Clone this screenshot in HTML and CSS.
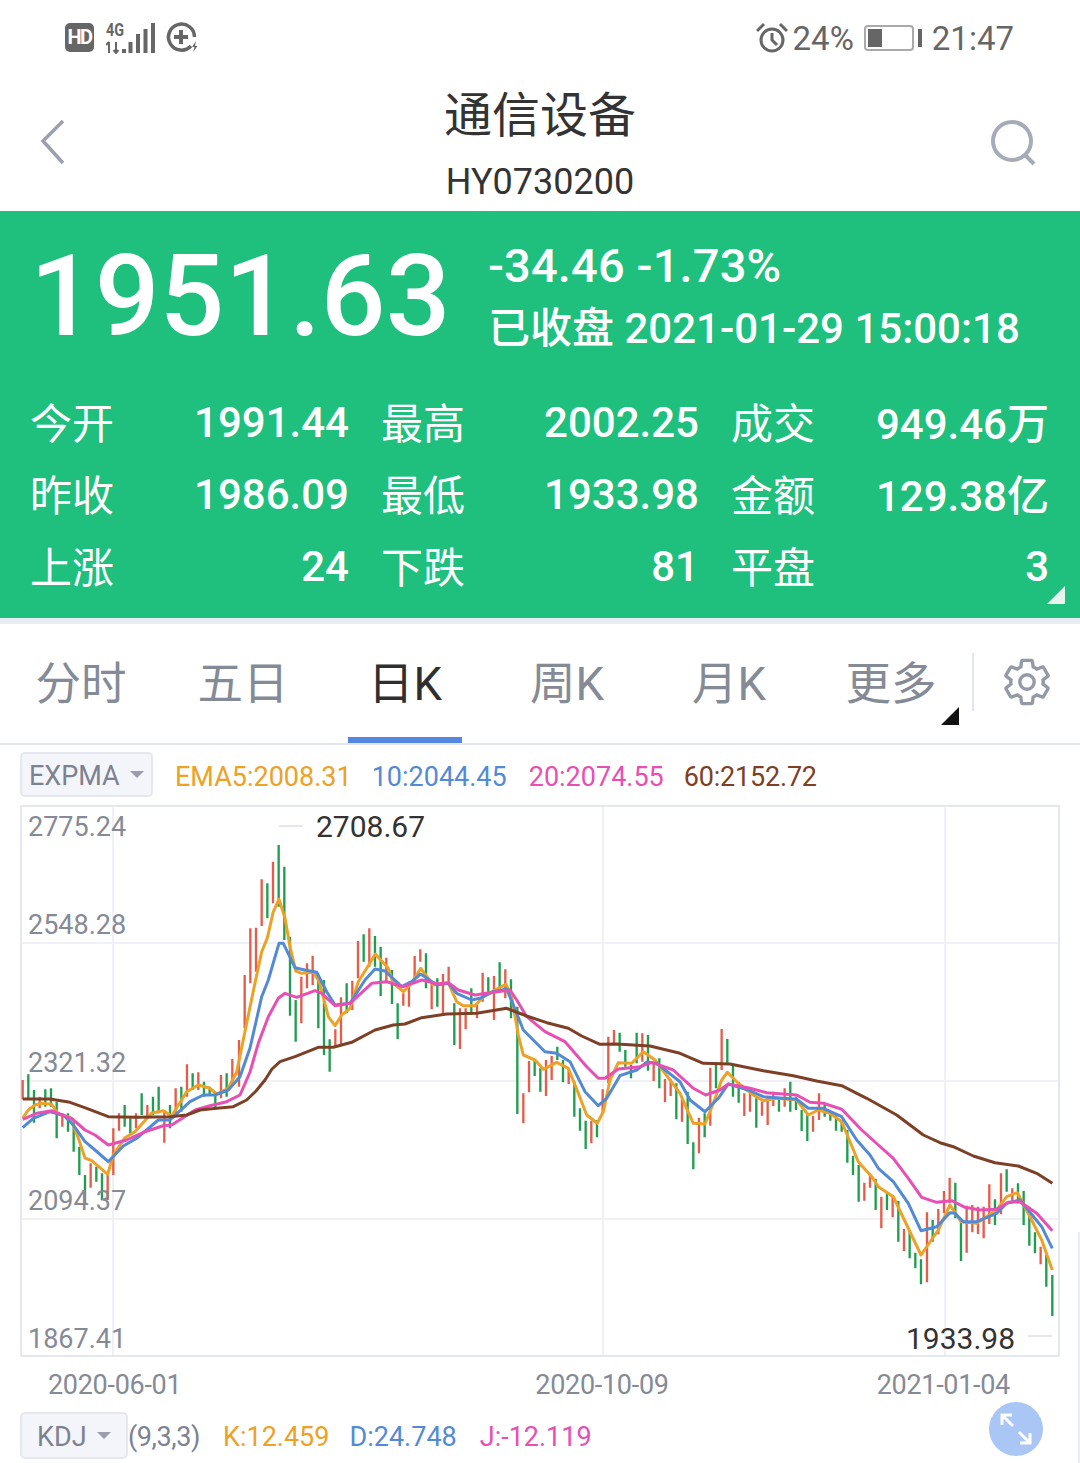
FILE: index.html
```html
<!DOCTYPE html>
<html lang="zh-CN">
<head>
    <meta charset="UTF-8">
    <meta name="viewport" content="width=device-width, initial-scale=1.0">
    <title>通信设备</title>
    <link rel="stylesheet" href="styles.css">
</head>
<body>
    <div class="status-bar">
        <div class="status-left">
            <span class="hd-badge">HD</span>
            <div class="signal">
                <span class="signal-type">4G</span>
                <svg class="signal-icon" width="50" height="32" viewBox="0 0 50 32">
                    <path class="signal-arrows" d="M3 20V31M0 23L3 20M10 20V31M7.5 28L10 31L12.5 28"/>
                    <path class="signal-bars" d="M18 27V31M24.5 20V31M32 12V31M39.5 7V31M47 1V31"/>
                </svg>
            </div>
            <svg class="data-icon" width="32" height="32" viewBox="0 0 32 32">
                <path class="status-ring" d="M25 24A13 13 0 1 1 28.5 15"/>
                <path class="status-plus" d="M15 8V22M8 15H22"/>
                <path class="status-fill" d="M30 19L26 25H28.5L27 30L31.5 24H29Z"/>
            </svg>
        </div>
        <div class="status-right">
            <svg class="alarm-icon" width="32" height="32" viewBox="0 0 32 32">
                <circle class="status-line" cx="16" cy="18" r="11"/>
                <path class="status-line" d="M16 11V18L21 23M1 9L8 2M31 9L24 2"/>
            </svg>
            <span class="status-text">24%</span>
            <div class="battery">
                <div class="battery-body"><div class="battery-level"></div></div>
                <div class="battery-cap"></div>
            </div>
            <span class="status-text">21:47</span>
        </div>
    </div>

    <div class="top-bar">
        <svg class="back-icon" width="28" height="46" viewBox="0 0 28 46">
            <path d="M24 2L4 22L24 44"/>
        </svg>
        <div class="top-title">
            <div class="title-name">通信设备</div>
            <div class="title-code">HY0730200</div>
        </div>
        <svg class="search-icon" width="48" height="48" viewBox="0 0 48 48">
            <circle cx="22" cy="21" r="19"/>
            <path d="M35 35L44 44"/>
        </svg>
    </div>

    <div class="quote">
        <div class="quote-top">
            <div class="quote-price">1951.63</div>
            <div class="quote-side">
                <div class="quote-change">-34.46 -1.73%</div>
                <div class="quote-time">已收盘 2021-01-29 15:00:18</div>
            </div>
        </div>
        <div class="quote-grid">
            <div class="cell"><span class="cell-name">今开</span><span class="cell-val">1991.44</span></div>
            <div class="cell"><span class="cell-name">最高</span><span class="cell-val">2002.25</span></div>
            <div class="cell"><span class="cell-name">成交</span><span class="cell-val cell-val-unit">949.46万</span></div>
            <div class="cell"><span class="cell-name">昨收</span><span class="cell-val">1986.09</span></div>
            <div class="cell"><span class="cell-name">最低</span><span class="cell-val">1933.98</span></div>
            <div class="cell"><span class="cell-name">金额</span><span class="cell-val cell-val-unit">129.38亿</span></div>
            <div class="cell"><span class="cell-name">上涨</span><span class="cell-val">24</span></div>
            <div class="cell"><span class="cell-name">下跌</span><span class="cell-val">81</span></div>
            <div class="cell"><span class="cell-name">平盘</span><span class="cell-val">3</span></div>
        </div>
        <div class="quote-corner"></div>
    </div>

    <div class="tabs">
        <div class="tab">分时</div>
        <div class="tab">五日</div>
        <div class="tab tab-active">日K</div>
        <div class="tab">周K</div>
        <div class="tab">月K</div>
        <div class="tab tab-more">更多</div>
        <div class="tabs-divider"></div>
        <svg class="gear-icon" width="54" height="54" viewBox="0 0 24 24">
            <path d="M19.14 12.94c.04-.3.06-.61.06-.94 0-.32-.02-.64-.07-.94l2.03-1.58c.18-.14.23-.41.12-.61l-1.92-3.32c-.12-.22-.37-.29-.59-.22l-2.39.96c-.5-.38-1.03-.7-1.62-.94l-.36-2.54c-.04-.24-.24-.41-.48-.41h-3.84c-.24 0-.43.17-.47.41l-.36 2.54c-.59.24-1.13.57-1.62.94l-2.39-.96c-.22-.08-.47 0-.59.22L2.74 8.87c-.12.21-.08.47.12.61l2.03 1.58c-.05.3-.09.63-.09.94s.02.64.07.94l-2.03 1.58c-.18.14-.23.41-.12.61l1.92 3.32c.12.22.37.29.59.22l2.39-.96c.5.38 1.03.7 1.62.94l.36 2.54c.05.24.24.41.48.41h3.84c.24 0 .44-.17.47-.41l.36-2.54c.59-.24 1.13-.56 1.62-.94l2.39.96c.22.08.47 0 .59-.22l1.92-3.32c.12-.22.07-.47-.12-.61l-2.01-1.58z"/>
            <circle cx="12" cy="12" r="3.2"/>
        </svg>
    </div>

    <div class="legend">
        <div class="picker picker-expma">EXPMA<span class="picker-caret"></span></div>
        <span class="c-orange">EMA5:2008.31</span>
        <span class="c-blue">10:2044.45</span>
        <span class="c-pink">20:2074.55</span>
        <span class="c-brown">60:2152.72</span>
    </div>

    <div class="chart">
        <svg class="chart-svg" width="1040" height="552" viewBox="20 805 1040 552">
            <path class="grid" d="M20 943H1060M20 1081H1060M20 1219H1060M113 805V1357M603 805V1357M945 805V1357"/>
            <rect class="frame" x="21" y="806" width="1038" height="550"/>
            <path class="tick" d="M279 826H303M1028 1336H1052"/>

            <!-- candles, first part -->
            <g transform="translate(20 1040) scale(.3333)">
                <path class="up" d="M8 120V178M59 170V205M127 225V260M212 370V443M263 400V480M280 265V405M297 220V272M348 220V265M382 195V230M433 210V308M467 145V230M501 73V170M535 97V150M603 105V175M637 57V125"/>
                <path class="down" d="M25 103V178M42 150V248M76 148V200M93 145V200M110 185V295M144 220V275M161 245V335M178 320V405M195 405V490M229 380V425M246 400V480M314 195V260M331 235V280M365 160V225M399 170V225M416 140V220M450 195V265M484 140V215M518 100V150M552 125V170M569 140V165M586 160V205M620 100V170"/>
            </g>
            <g transform="translate(230 840) scale(.3333)">
                <path class="up" d="M27 600V740M44 405V565M61 265V430M78 263V395M95 118V258M129 65V190M214 410V550M231 370V445M248 347V435M316 568V620M333 472V612M367 422V510M384 303V415M418 265V380M469 353V425M520 460V497M537 425V500M554 348V430M571 328V365M605 430V508M639 402V520M656 380V430M690 505V627M707 505V568M741 490V535M758 398V485M792 408V540M826 388V475"/>
                <path class="down" d="M112 130V235M146 15V200M163 80V300M180 290V527M197 480V605M265 420V565M282 420V645M299 598V695M350 430V520M401 283V365M435 288V380M452 320V468M486 390V492M503 490V597M588 340V445M622 415V500M673 490V615M724 445V525M775 412V460M809 367V448M843 418V535"/>
            </g>
            <g transform="translate(510 1000) scale(.3333)">
                <path class="up" d="M40 280V370M57 183V277M108 180V288M125 168V240M176 205V252M244 362V430M278 268V340M295 110V250M312 90V135M397 100V185M431 190V243M465 237V307M482 237V288M516 297V365M567 353V460M601 203V377M635 87V210M703 280V348M720 280V335M756 305V347M773 290V375M790 275V318M824 265V320"/>
                <path class="down" d="M22 20V342M74 180V228M91 205V275M142 140V180M159 180V247M193 245V350M210 325V392M227 362V447M261 360V412M329 98V155M346 150V200M363 195V235M380 98V190M414 105V212M448 175V265M499 250V358M533 275V432M550 427V508M584 340V412M618 187V265M652 117V195M669 195V290M686 245V308M739 295V383M807 295V335M841 245V335M858 290V330M875 330V393M892 340V423"/>
            </g>
            <g transform="translate(800 1070) scale(.3333)">
                <path class="up" d="M39 138V185M57 70V150M193 338V392M210 310V353M244 380V475M278 375V442M312 477V543M381 427V637M415 417V493M432 363V430M449 323V400M500 407V548M517 405V487M534 410V492M551 410V505M568 343V462M603 310V433M637 355V395M722 530V583"/>
                <path class="down" d="M74 105V140M91 125V152M108 130V182M125 150V185M142 180V278M159 257V315M176 285V395M227 327V420M261 370V420M295 393V515M329 487V565M346 548V595M363 568V643M398 450V515M466 338V445M483 455V573M585 388V465M620 298V365M654 340V400M671 363V465M688 410V527M705 487V550M739 555V650M757 615V738"/>
            </g>

            <polyline class="line line-orange" points="22.7,1118 28.3,1110 35,1105 41.7,1103.3 51.7,1104.3 58.3,1114 70,1117.3 78.3,1138 85,1158 91.7,1160.7 107.7,1174.3 113.3,1155 125,1137.7 135,1131.7 151.7,1113 163.3,1110.7 171.7,1116 186.7,1091.7 198.3,1085 210,1088.3 216.7,1094 228.3,1088.3 236.7,1072 246.7,1023 255,983 261.7,951.7 267.3,938 273.3,911.7 279,899.3 285,918.3 290,946.7 295.7,971 301.7,973.3 313.3,972.3 319.3,981.7 328.3,1016.7 335,1025.7 341.7,1015 350,1008.3 358.3,981.7 366.7,968.3 375.3,954 388.3,968.3 393.3,983.3 403.3,991.7 411.7,983.3 420.7,968.3 433.3,985 448.3,982.7 456.7,1001.7 463.3,1005.7 475,1005.7 485,995 495,990 506,984.3 511.7,996.7 518.3,1035 523.3,1055 535,1060 543.3,1069.3 556.7,1062.3 568.3,1068.3 578.3,1093.3 586.7,1115 597.3,1123.3 603.3,1111.7 610,1080 618.3,1062.7 631.7,1063.3 643.3,1051.7 655,1060 670,1080 680,1093.3 693.3,1123.3 705,1124 713.3,1103.3 721.7,1080 727.3,1072.3 738.3,1083.3 753.3,1095 763.3,1100.7 776.7,1098.3 796.7,1100 808.3,1115 818.3,1110 830,1113.3 841.7,1121.7 850,1141.7 858.3,1161.7 871.7,1176.7 878.3,1186.7 893.3,1196.7 906.7,1225 921,1255 938.3,1230 950,1205 961,1221.7 976.7,1223.3 996.7,1210 1006.7,1196.7 1017.3,1192.7 1030,1216.7 1041.7,1240 1052.3,1270"/>
            <polyline class="line line-blue" points="22.7,1127.7 33.3,1118.3 50,1111.7 63.3,1115 73.3,1125 85,1141.7 95,1150 108.3,1161.7 123.3,1146 136.7,1138.3 158.3,1120 170,1120 190,1101.7 203.3,1095 215,1095 228.3,1090 240,1076.7 250,1048 261.7,996.7 268.3,980 279,943.3 283.3,943.3 295,967.7 305,970 316.7,972.3 326.7,991.7 335,1005 350,1003.3 365,980 375,969 385,971 401.7,986.7 411.7,981.7 420.7,974 436.7,985 448.3,983.3 456.7,993.3 471.7,1000 480,998.3 493.3,991.7 506.7,989 516.7,1013.3 523.3,1030 535,1041.7 545,1051.7 556.7,1053.3 570,1061.7 585,1091.7 598.3,1105.7 606.7,1098.3 620,1075.7 636.7,1070 646.7,1062.3 656.7,1063.3 680,1081.7 690,1100 705,1111.7 718.3,1098.3 728.3,1084 748.3,1090 763.3,1096.7 796.7,1099.3 808.3,1108.3 823.3,1108.3 841.7,1116.7 856.7,1140 870,1155 878.3,1168.3 893.3,1181.7 908.3,1203.3 921,1230.7 936.7,1226.7 950,1212.7 955,1213.3 963.3,1221.7 976.7,1221.7 996.7,1213.3 1006.7,1203.3 1020,1200 1041.7,1226.7 1052.3,1248.3"/>
            <polyline class="line line-pink" points="22.7,1119.3 36.7,1113.3 51.7,1110.7 61.7,1115 71.7,1118.3 85,1130 95,1135 108.3,1145 126.7,1140 145,1131.7 163.3,1125.7 171.7,1125 195,1110 210,1105.7 226.7,1101.7 240,1095 250,1072 258.3,1043.3 268.3,1016.7 278.3,998.3 285,993.3 296.7,997.3 315,990.7 321.7,993.3 335,1005.7 350,1003.3 371.7,983.3 386.7,981.7 403.3,986.7 421.7,980 438.3,984 448.3,982.7 458.3,990 475,995 490,992.7 510,990 516.7,1000 526.7,1016.7 545,1031.7 565,1041.7 586.7,1066.7 598.3,1078.3 605,1078.3 618.3,1069 640,1066.7 651.7,1062.3 673.3,1070 693.3,1088.3 705.7,1095 720,1090 728.3,1084 750,1088.3 766.7,1092.7 796.7,1095 810,1102.3 823.3,1103.3 841.7,1109.3 861.7,1130 878.3,1145 893.3,1158.3 908.3,1178.3 921.7,1197.3 936.7,1202.3 951.7,1200.7 965,1207.3 980,1210 996.7,1209.3 1008.3,1202.3 1020,1201.7 1036.7,1213.3 1052.3,1230.7"/>
            <polyline class="line line-brown" points="22.7,1099 50,1099 70,1102.3 86.7,1108.3 108.3,1116.7 136.7,1117.3 170,1116.7 186.7,1115 200,1110 216.7,1108.3 233.3,1106.7 246.7,1100 256,1091 265,1080 272,1069 280,1061.7 295,1056.7 318.3,1047.3 333.3,1047.3 351.7,1042.3 375,1030 393.3,1025 405,1024 421.7,1017.7 446.7,1014 476.7,1013.3 506.7,1008.3 526.7,1016 546.7,1022.7 568.3,1028.3 581.7,1036 600,1044.3 616.7,1044 650,1046 680,1053.3 703.3,1063.3 730,1064 763.3,1070.7 793.3,1075.7 816.7,1081 841.7,1085.7 866.7,1098.3 896.7,1115 923.3,1135 940,1142.7 953.3,1146.7 973.3,1156 995,1162.7 1018.3,1166 1036.7,1173.3 1052.3,1183.3"/>
        </svg>

        <span class="axis-label axis-1">2775.24</span>
        <span class="axis-label axis-2">2548.28</span>
        <span class="axis-label axis-3">2321.32</span>
        <span class="axis-label axis-4">2094.37</span>
        <span class="axis-label axis-5">1867.41</span>
        <span class="peak-label peak-high">2708.67</span>
        <span class="peak-label peak-low">1933.98</span>
    </div>

    <div class="dates">
        <span class="date-1">2020-06-01</span>
        <span class="date-2">2020-10-09</span>
        <span class="date-3">2021-01-04</span>
    </div>

    <div class="kdj">
        <div class="picker picker-kdj">KDJ<span class="picker-caret"></span></div>
        <span class="kdj-params">(9,3,3)</span>
        <span class="c-orange">K:12.459</span>
        <span class="c-blue">D:24.748</span>
        <span class="c-pink">J:-12.119</span>
    </div>

    <div class="expand-btn">
        <svg width="34" height="34" viewBox="0 0 34 34">
            <path d="M3 13V3H13M3 3L14 14M31 21V31H21M31 31L20 20"/>
        </svg>
    </div>
    <div class="side-edge"></div>
</body>
</html>
```

FILE: styles.css
```css
body {
    font-family: Roboto, "Noto Sans CJK SC", sans-serif;
    margin: 0;
    width: 1080px;
    height: 1463px;
    overflow: hidden;
    position: relative;
    background-color: #fff;
    color: #333;
}

/* status bar */
.status-bar {
    height: 75px;
    display: flex;
    justify-content: space-between;
    align-items: center;
    padding: 0 66px 0 65px;
}
.status-left, .status-right {
    display: flex;
    align-items: center;
}
.hd-badge {
    width: 29px;
    height: 29px;
    background-color: #666;
    border-radius: 5px;
    color: #fff;
    font-size: 20px;
    font-weight: 700;
    letter-spacing: -1.5px;
    line-height: 29px;
    text-align: center;
}
.signal {
    position: relative;
    width: 50px;
    height: 32px;
    margin-left: 12px;
}
.signal-type {
    position: absolute;
    left: 0;
    top: 0;
    font-size: 18px;
    font-weight: 700;
    line-height: 16px;
    color: #666;
    transform: scaleX(.8);
    transform-origin: left;
}
.signal-icon {
    display: block;
}
.signal-arrows {
    fill: none;
    stroke: #666;
    stroke-width: 2;
}
.signal-bars {
    fill: none;
    stroke: #666;
    stroke-width: 4;
}
.data-icon {
    margin-left: 10px;
}
.status-ring {
    fill: none;
    stroke: #666;
    stroke-width: 3.5;
}
.status-plus {
    fill: none;
    stroke: #666;
    stroke-width: 4;
}
.status-line {
    fill: none;
    stroke: #666;
    stroke-width: 3;
}
.status-fill {
    fill: #666;
}
.alarm-icon {
    margin-right: 5px;
}
.status-text {
    font-size: 33px;
    line-height: 40px;
    padding-top: 2px;
    color: #666;
}
.battery {
    display: flex;
    align-items: center;
    margin: 0 10px;
}
.battery-body {
    box-sizing: border-box;
    width: 50px;
    height: 26px;
    border: 2px solid #aaa;
    border-radius: 4px;
    padding: 2px;
}
.battery-level {
    width: 14px;
    height: 100%;
    background-color: #666;
}
.battery-cap {
    width: 4px;
    height: 18px;
    margin-left: 4px;
    background-color: #666;
}

/* title */
.top-bar {
    height: 136px;
    position: relative;
}
.top-title {
    text-align: center;
    padding-top: 8px;
}
.title-name {
    font-size: 48px;
    line-height: 66px;
    color: #333;
}
.title-code {
    font-size: 36px;
    line-height: 44px;
    margin-top: 11px;
    color: #333;
}
.back-icon {
    position: absolute;
    left: 39px;
    top: 44px;
    fill: none;
    stroke: #9aa0ad;
    stroke-width: 3.5;
}
.search-icon {
    position: absolute;
    left: 990px;
    top: 45px;
    fill: none;
    stroke: #a5abb8;
    stroke-width: 4;
}

/* quote */
.quote {
    height: 407px;
    background-color: #1fc07e;
    color: #fff;
    position: relative;
    border-bottom: 6px solid #e8ecf4;
}
.quote-top {
    display: flex;
    height: 176px;
}
.quote-price {
    width: 412px;
    margin: 20px 0 0 30px;
    font-size: 114px;
    font-weight: 500;
    line-height: 130px;
}
.quote-side {
    margin: 30px 0 0 46px;
}
.quote-change {
    font-size: 47px;
    font-weight: 500;
    letter-spacing: .15px;
    line-height: 50px;
}
.quote-time {
    font-size: 42px;
    font-weight: 500;
    line-height: 50px;
    margin-top: 13px;
    white-space: nowrap;
}
.quote-grid {
    display: grid;
    grid-template-columns: 319px 318px 318px;
    grid-auto-rows: 72px;
    column-gap: 32px;
    padding-left: 30px;
}
.cell {
    display: flex;
    justify-content: space-between;
    align-items: center;
    font-size: 42px;
}
.cell-name {
    font-size: 42px;
    margin-top: -6px;
}
.cell-val {
    font-weight: 500;
    margin-top: -2px;
}
.cell-val-unit {
    margin-top: -6px;
}
.quote-corner {
    position: absolute;
    left: 1047px;
    top: 375px;
    width: 18px;
    height: 18px;
    background-color: #e8f4ee;
    clip-path: polygon(100% 0, 100% 100%, 0 100%);
}

/* tabs */
.tabs {
    height: 119px;
    display: flex;
    align-items: center;
    position: relative;
    border-bottom: 2px solid #e4e6ee;
}
.tab {
    width: 162px;
    height: 119px;
    line-height: 122px;
    text-align: center;
    font-size: 45.5px;
    color: #858a97;
    position: relative;
}
.tab-active {
    color: #2f2f2f;
}
.tab-active::after {
    content: "";
    position: absolute;
    left: 24px;
    bottom: 0;
    width: 114px;
    height: 6px;
    background-color: #5488e0;
}
.tab-more::after {
    content: "";
    position: absolute;
    left: 131px;
    top: 83px;
    width: 18px;
    height: 18px;
    background-color: #111;
    clip-path: polygon(100% 0, 100% 100%, 0 100%);
}
.tabs-divider {
    width: 2px;
    height: 58px;
    margin-top: -4px;
    background-color: #e4e6ee;
}
.gear-icon {
    margin: -4px 0 0 26px;
    fill: none;
    stroke: #9499a6;
    stroke-width: 1.5;
}

/* indicator rows */
.legend {
    height: 60px;
    display: flex;
    align-items: center;
    gap: 20px;
    padding-left: 20px;
    font-size: 27px;
}
.legend span {
    padding-top: 3px;
}
.legend .picker-caret {
    padding-top: 0;
}
.legend .c-pink {
    margin-left: 2px;
}
.legend .c-brown {
    letter-spacing: -.2px;
}
.picker {
    display: flex;
    align-items: center;
    box-sizing: border-box;
    border: 2px solid #e6e8f0;
    border-radius: 5px;
    background-color: #f4f5fa;
    color: #7d8291;
    font-size: 27px;
    padding-top: 2px;
}
.picker-expma {
    width: 133px;
    height: 45px;
    padding-left: 7px;
    margin: -1px 2px 0 0;
}
.picker-kdj {
    width: 108px;
    height: 47px;
    padding-left: 15px;
}
.picker-caret {
    width: 0;
    height: 0;
    margin: -2px 0 0 10px;
    border-left: 7px solid transparent;
    border-right: 7px solid transparent;
    border-top: 7px solid #9a9eaa;
}
.c-orange { color: #eda125; }
.c-blue { color: #528ad6; }
.c-pink { color: #e84fb4; }
.c-brown { color: #7d4026; }

/* chart */
.chart {
    width: 1040px;
    height: 552px;
    margin-left: 20px;
    position: relative;
}
.chart-svg {
    display: block;
}
.grid {
    fill: none;
    stroke: #f0f1f7;
    stroke-width: 2;
}
.frame {
    fill: none;
    stroke: #e6e8f0;
    stroke-width: 2;
}
.tick {
    fill: none;
    stroke: #e6e8f0;
    stroke-width: 2;
}
.up, .down {
    fill: none;
    stroke-width: 7;
}
.up { stroke: #e45c4a; }
.down { stroke: #1f9e4f; }
.line {
    fill: none;
    stroke-width: 3;
    stroke-linejoin: round;
}
.line-orange { stroke: #eda125; }
.line-blue { stroke: #528ad6; }
.line-pink { stroke: #e84fb4; }
.line-brown { stroke: #7d4026; }
.axis-label {
    position: absolute;
    left: 8px;
    font-size: 27px;
    line-height: 32px;
    color: #858a97;
}
.axis-1 { top: 6px; }
.axis-2 { top: 104px; }
.axis-3 { top: 242px; }
.axis-4 { top: 380px; }
.axis-5 { top: 518px; }
.peak-label {
    position: absolute;
    font-size: 30px;
    line-height: 36px;
    color: #333;
}
.peak-high { left: 296px; top: 4px; }
.peak-low { left: 886px; top: 516px; }

.dates {
    height: 54px;
    display: flex;
    align-items: center;
    padding: 2px 0 0 48px;
    box-sizing: border-box;
    font-size: 27px;
    letter-spacing: -.3px;
    color: #858a97;
}
.date-2 { margin-left: 354px; }
.date-3 { margin-left: 208px; }

.kdj {
    display: flex;
    align-items: center;
    margin-top: 1px;
    padding-left: 20px;
    font-size: 27px;
}
.kdj > span {
    padding-top: 2px;
}
.kdj-params {
    letter-spacing: -.4px;
    color: #7d8291;
}
.kdj .c-orange { margin-left: 23px; }
.kdj .c-blue { margin-left: 20px; }
.kdj .c-pink { margin-left: 23px; }

.expand-btn {
    position: absolute;
    left: 989px;
    top: 1402px;
    width: 54px;
    height: 54px;
    border-radius: 50%;
    background-color: #a9c6f5;
    display: flex;
    align-items: center;
    justify-content: center;
}
.expand-btn path {
    fill: none;
    stroke: #fff;
    stroke-width: 3;
}
.side-edge {
    position: absolute;
    right: 0;
    top: 1232px;
    width: 2px;
    height: 231px;
    background-color: #e8ecf4;
}
```
